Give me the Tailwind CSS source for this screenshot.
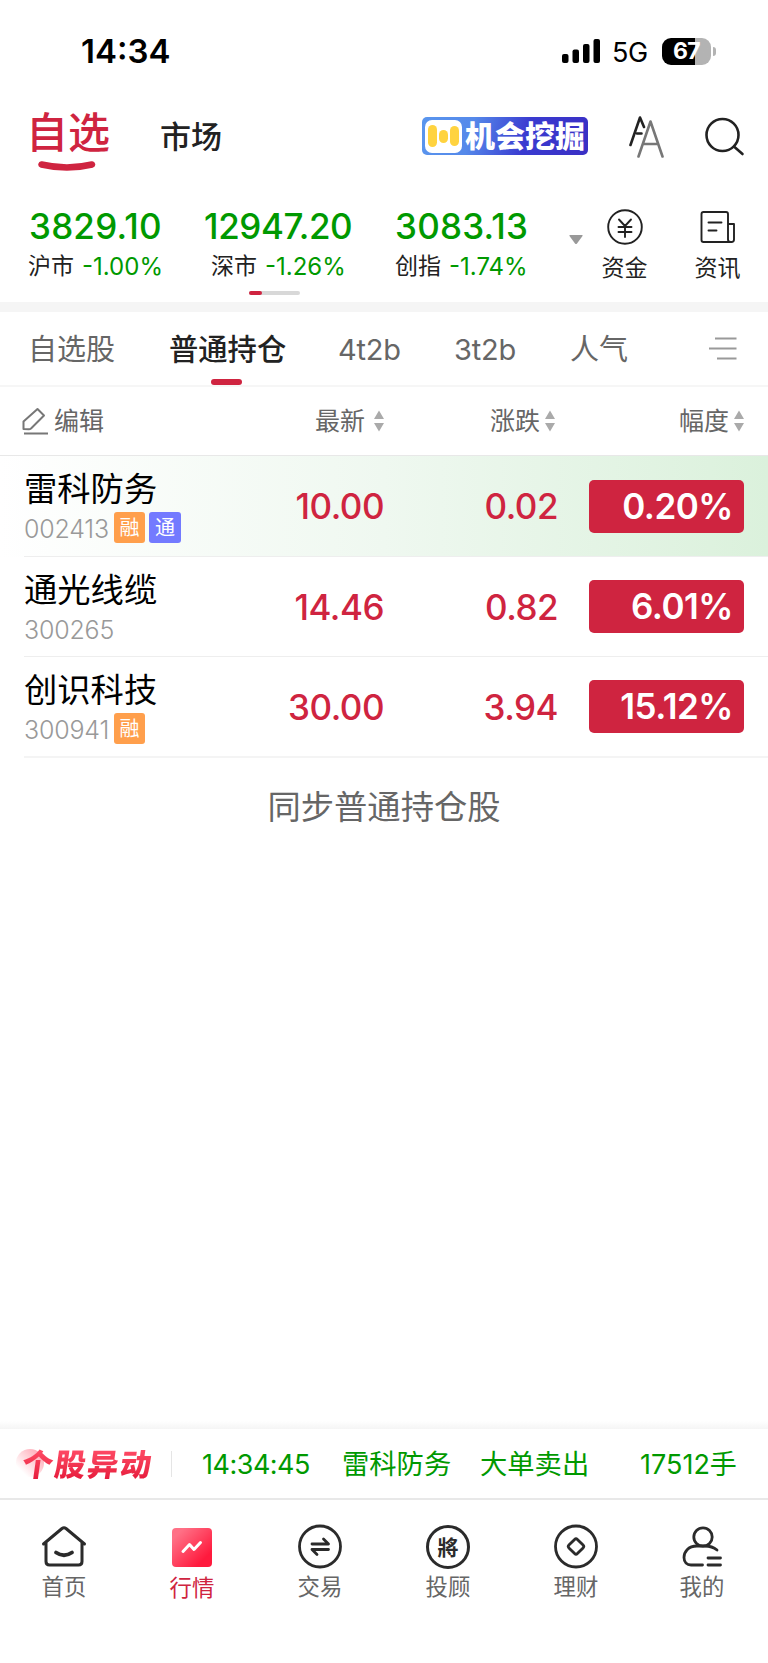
<!DOCTYPE html>
<html lang="zh-CN">
<head>
    <meta charset="UTF-8">
    <meta name="viewport" content="width=device-width, initial-scale=1.0">
    <title>自选</title>
    <script src="https://cdn.jsdelivr.net/npm/@tailwindcss/browser@4"></script>
    <style>
        body {
            font-family: 'Inter', 'Noto Sans CJK SC', sans-serif;
        }
    </style>
</head>
<body class="bg-white">
    <div class="w-[768px] h-[1663px] flex flex-col overflow-hidden whitespace-nowrap leading-none text-[#222]">

        <!-- Status bar -->
        <div class="h-[102px] flex items-center pl-[81px] pr-[52px] text-black">
            <span class="text-[33px] font-semibold">14:34</span>
            <svg class="ml-auto" width="38" height="24" viewBox="0 0 38 24">
                <rect x="0" y="15" width="6.5" height="9" rx="2"/>
                <rect x="10.5" y="10.5" width="6.5" height="13.5" rx="2"/>
                <rect x="21" y="5" width="6.5" height="19" rx="2"/>
                <rect x="31.5" y="0" width="6.5" height="24" rx="2"/>
            </svg>
            <span class="ml-[12px] w-[37px] pt-[2px] text-[27px] tracking-[-0.3px]">5G</span>
            <div class="ml-[13px] w-[49px] h-[27px] rounded-[9px] bg-linear-to-r from-black from-67% to-[#b3b3b3] to-67% flex items-center justify-center text-white text-[23px] tracking-[-0.6px] font-bold">67</div>
            <div class="ml-[2px] w-[3px] h-[9px] rounded-r-full bg-[#b3b3b3]"></div>
        </div>

        <!-- Header -->
        <header class="h-[88px] flex items-start pl-[28px]">
            <div class="w-[132px] pt-[10px]">
                <div class="-ml-[2px] text-[42px] font-medium text-[#cf2440]">自选</div>
                <svg class="ml-[10px] mt-[7px]" width="58" height="12" viewBox="0 0 58 12" fill="none" stroke="#cf2440" stroke-width="6.5" stroke-linecap="round">
                    <path d="M3.5 3.5Q29 9.5 54 3.5"/>
                </svg>
            </div>
            <div class="w-[262px] pt-[19px] text-[31px] font-medium">市场</div>
            <div class="mt-[15px] w-[166px] h-[38px] rounded-[5px] bg-linear-[105deg,#5a96ee_0%,#5589ea_30%,#3a3bd0_62%,#3a2fc4_100%] flex items-center pl-[3px]">
                <div class="w-[37px] h-[33px] rounded-[7px] bg-white flex items-center justify-center gap-[2px]">
                    <span class="w-[9px] h-[22px] rounded-full bg-[#ffd33f]"></span>
                    <span class="w-[9px] h-[13px] rounded-full bg-[#ffd33f]"></span>
                    <span class="w-[9px] h-[20px] rounded-full bg-[#ffd33f]"></span>
                </div>
                <span class="ml-[3px] text-[30px] font-black text-white">机会挖掘</span>
            </div>
            <svg class="ml-[41px] mt-[14px]" width="36" height="42" viewBox="0 0 36 42" fill="none" stroke-width="2.6" stroke-linecap="round" stroke-linejoin="round">
                <path stroke="#222" d="M1.5 29L11 1.5L15 11M8 17.5H12.5"/>
                <path stroke="#777" d="M9.5 40.5L21.5 5.5L33.5 40.5M14 28H29"/>
            </svg>
            <svg class="ml-[40px] mt-[15px]" width="40" height="40" viewBox="0 0 40 40" fill="none" stroke="#222" stroke-width="2.6" stroke-linecap="round">
                <circle cx="17.5" cy="18" r="16"/>
                <path d="M29.5 30L37.5 37"/>
            </svg>
        </header>

        <!-- Indexes -->
        <section class="h-[112px] flex flex-col">
            <div class="h-[101px] flex items-start pt-[18px] pl-[29px]">
                <div class="w-[175px] pt-px">
                    <div class="text-[35px] font-medium tracking-[0.2px] text-[#090]">3829.10</div>
                    <div class="mt-[11px] -ml-px flex gap-[8px] text-[23px]"><span>沪市</span><span class="text-[24px] text-[#090]">-1.00%</span></div>
                </div>
                <div class="w-[191px] pt-px">
                    <div class="text-[35px] font-medium tracking-[-0.4px] text-[#090]">12947.20</div>
                    <div class="mt-[11px] ml-[7px] flex gap-[8px] text-[23px]"><span>深市</span><span class="text-[24px] text-[#090]">-1.26%</span></div>
                </div>
                <div class="w-[174px] pt-px">
                    <div class="text-[35px] font-medium tracking-[0.2px] text-[#090]">3083.13</div>
                    <div class="mt-[11px] flex gap-[8px] text-[23px]"><span>创指</span><span class="text-[24px] text-[#090]">-1.74%</span></div>
                </div>
                <svg class="mt-[27px]" width="14" height="10" viewBox="0 0 14 10"><path fill="#999" d="M1 0H13Q14 0 13.5 1L8 8.5Q7 9.5 6 8.5L0.5 1Q0 0 1 0Z"/></svg>
                <div class="ml-[18px] w-[47px] pt-px flex flex-col items-center">
                    <svg width="36" height="36" viewBox="0 0 36 36" fill="none" stroke="#222" stroke-width="1.9" stroke-linecap="round">
                        <circle cx="18" cy="18" r="16.8"/>
                        <path d="M12 10.5L18 17L24 10.5M18 17V28M11.5 18H24.5M11.5 23H24.5"/>
                    </svg>
                    <div class="mt-[12px] text-[23px]">资金</div>
                </div>
                <div class="ml-[46px] w-[47px] pt-px flex flex-col items-center">
                    <svg width="36" height="36" viewBox="0 0 36 36" fill="none" stroke="#222" stroke-width="1.9" stroke-linecap="round" stroke-linejoin="round">
                        <path d="M28 15V5Q28 3 26 3H3.5Q1.5 3 1.5 5V31Q1.5 33 3.5 33H31.5Q34 33 34 30.5V15H28V30.5Q28 33 31 33M8.5 13.5H21.5M8.5 21.5H16.5"/>
                    </svg>
                    <div class="mt-[12px] text-[23px]">资讯</div>
                </div>
            </div>
            <div class="ml-[249px] w-[51px] h-[4px] rounded-full bg-[#d8d8d8]">
                <div class="w-[13px] h-[4px] rounded-full bg-[#cf2440]"></div>
            </div>
        </section>
        <div class="h-[10px] bg-[#f5f5f5]"></div>

        <!-- Group tabs -->
        <nav class="h-[75px] border-b-2 border-[#f6f6f6] flex items-start pl-[28px] text-[29px] text-[#666]">
            <div class="w-[141px] pt-[23px]">自选股</div>
            <div class="w-[169px] pt-[23px] text-[29.3px] font-medium text-[#222]">
                普通持仓
                <div class="mt-[15px] ml-[42px] w-[31px] h-[6px] rounded-full bg-[#cf2440]"></div>
            </div>
            <div class="w-[116px] pt-[23px] tracking-[-0.2px]">4t2b</div>
            <div class="w-[116px] pt-[23px] tracking-[-0.2px]">3t2b</div>
            <div class="w-[139px] pt-[23px]">人气</div>
            <svg class="mt-[25px]" width="28" height="24" viewBox="0 0 28 24" stroke="#999" stroke-width="2"><path d="M6 1.5H27.5M0 11.5H27.5M8 21.5H27.5"/></svg>
        </nav>

        <!-- Column headings -->
        <div class="h-[69px] border-b border-[#e8e8e8] flex items-center pl-[22px] text-[25px] text-[#666]">
            <svg width="27" height="28" viewBox="0 0 27 28" fill="none" stroke="#777" stroke-width="2" stroke-linejoin="round">
                <path d="M1.5 22V14.5L15.5 2L22 8.5L9 21.5Q8 22.3 7 22.3ZM2 26.5H26"/>
            </svg>
            <span class="ml-[5px] w-[261px]">编辑</span>
            <span class="w-[59px]">最新</span>
            <svg width="10" height="22" viewBox="0 0 10 22" fill="#aaa"><path d="M0 9L5 0.5L10 9ZM0 13L5 21.5L10 13Z"/></svg>
            <span class="ml-[106px] w-[55px]">涨跌</span>
            <svg width="10" height="22" viewBox="0 0 10 22" fill="#aaa"><path d="M0 9L5 0.5L10 9ZM0 13L5 21.5L10 13Z"/></svg>
            <span class="ml-[124px] w-[55px]">幅度</span>
            <svg width="10" height="22" viewBox="0 0 10 22" fill="#aaa"><path d="M0 9L5 0.5L10 9ZM0 13L5 21.5L10 13Z"/></svg>
        </div>

        <!-- Stocks -->
        <div class="pl-[24px] bg-linear-to-r from-white via-[#eff8f0] to-[#dbf1dc]">
            <div class="h-[101px] border-b border-[#eee] flex items-center text-[35px] font-medium tracking-[-0.5px] text-[#cf2440]">
                <div class="w-[200px] h-full pt-[17px] text-black font-normal tracking-normal">
                    <div class="text-[33.3px]">雷科防务</div>
                    <div class="mt-[6px] flex items-center gap-[4px] text-[25px] text-[#999]">
                        <span class="pt-[4px] w-[86px] font-light tracking-[-0.2px]">002413</span>
                        <span class="w-[31px] h-[31px] rounded-[3px] bg-[#ff9f4c] text-white text-[20px] flex items-center justify-center">融</span>
                        <span class="w-[32px] h-[31px] rounded-[3px] bg-[#737aff] text-white text-[20px] flex items-center justify-center">通</span>
                    </div>
                </div>
                <div class="w-[160px] pt-px text-right">10.00</div>
                <div class="w-[174px] pt-px text-right">0.02</div>
                <div class="ml-[31px] w-[155px] h-[53px] rounded-[5px] bg-[#cf2440] text-white font-semibold flex items-center justify-end pr-[11px]">0.20%</div>
            </div>
        </div>
        <div class="pl-[24px]">
            <div class="h-[100px] border-b border-[#eee] flex items-center text-[35px] font-medium tracking-[-0.5px] text-[#cf2440]">
                <div class="w-[200px] h-full pt-[17px] text-black font-normal tracking-normal">
                    <div class="text-[33.3px]">通光线缆</div>
                    <div class="mt-[6px] h-[31px] flex items-center gap-[4px] text-[25px] text-[#999]">
                        <span class="pt-[4px] font-light tracking-[-0.2px]">300265</span>
                    </div>
                </div>
                <div class="w-[160px] pt-px text-right">14.46</div>
                <div class="w-[174px] pt-px text-right">0.82</div>
                <div class="ml-[31px] w-[155px] h-[53px] rounded-[5px] bg-[#cf2440] text-white font-semibold flex items-center justify-end pr-[11px]">6.01%</div>
            </div>
            <div class="h-[101px] border-b-2 border-[#f4f4f4] flex items-center text-[35px] font-medium tracking-[-0.5px] text-[#cf2440]">
                <div class="w-[200px] h-full pt-[17px] text-black font-normal tracking-normal">
                    <div class="text-[33.3px]">创识科技</div>
                    <div class="mt-[6px] flex items-center gap-[4px] text-[25px] text-[#999]">
                        <span class="pt-[4px] w-[86px] font-light tracking-[-0.2px]">300941</span>
                        <span class="w-[31px] h-[31px] rounded-[3px] bg-[#ff9f4c] text-white text-[20px] flex items-center justify-center">融</span>
                    </div>
                </div>
                <div class="w-[160px] pt-px text-right">30.00</div>
                <div class="w-[174px] pt-px text-right">3.94</div>
                <div class="ml-[31px] w-[155px] h-[53px] rounded-[5px] bg-[#cf2440] text-white font-semibold flex items-center justify-end pr-[11px]">15.12%</div>
            </div>
        </div>
        <div class="pt-[33px] text-center text-[33.3px] text-[#666]">同步普通持仓股</div>

        <!-- Unusual moves ticker -->
        <div class="mt-auto h-[8px] bg-linear-to-b from-white to-[#f5f5f5]"></div>
        <div class="h-[71px] border-b-2 border-[#e8e8e8] flex items-center pl-[16px] text-[27px] text-[#090]">
            <div class="relative w-[155px] h-[30px]">
                <div class="absolute left-0 top-0 size-[28px] rounded-full bg-linear-to-bl from-[#ff9bac] to-white to-80%"></div>
                <div class="absolute left-[6px] top-0 -skew-x-8 text-[31px] tracking-[1.8px] font-black bg-linear-to-b from-[#ff4b66] to-[#e6173b] bg-clip-text text-transparent">个股异动</div>
            </div>
            <div class="w-px h-[26px] bg-[#e5e5e5]"></div>
            <span class="ml-[30px] w-[140px] pt-[2px] tracking-[-0.5px]">14:34:45</span>
            <span class="w-[138px] pt-[2px] text-[27.3px]">雷科防务</span>
            <span class="w-[160px] pt-[2px] text-[27.3px]">大单卖出</span>
            <span class="pt-[2px]">17512手</span>
        </div>

        <!-- Bottom tabs -->
        <nav class="h-[163px] pt-[24px] flex text-[22.4px] text-[#666]">
            <div class="w-[128px] flex flex-col items-center gap-[6px]">
                <svg width="46" height="46" viewBox="0 0 46 46" fill="none" stroke="#2b2b2b" stroke-width="3" stroke-linecap="round" stroke-linejoin="round">
                    <path d="M2.5 20L21 4.5Q23 3 25 4.5L43.5 20M5 18.5V37.5Q5 41 8.5 41H37.5Q41 41 41 37.5V18.5"/>
                    <path d="M15 28.5Q23 34 31 28.5" stroke-width="3.8"/>
                </svg>
                <span>首页</span>
            </div>
            <div class="w-[128px] flex flex-col items-center gap-[6px] text-[#cf2440]">
                <svg width="46" height="46" viewBox="0 0 46 46" fill="none">
                    <defs><linearGradient id="market" x1="0" y1="0" x2="1" y2="1"><stop offset=".15" stop-color="#ff7086"/><stop offset=".8" stop-color="#ff1a3d"/></linearGradient></defs>
                    <rect x="3" y="4" width="40" height="39" rx="4" fill="url(#market)"/>
                    <path d="M14 27.5L20.5 20.5L25 25.5L31.5 18.5" stroke="#fff" stroke-width="3" stroke-linecap="round" stroke-linejoin="round"/>
                </svg>
                <span class="pt-px">行情</span>
            </div>
            <div class="w-[128px] flex flex-col items-center gap-[6px]">
                <svg width="46" height="46" viewBox="0 0 46 46" fill="none" stroke="#2b2b2b" stroke-width="2.8" stroke-linecap="round" stroke-linejoin="round">
                    <circle cx="23" cy="22.5" r="20.5"/>
                    <path d="M15 20H31.5L26.5 15M31.5 25.5H15L20 30.5"/>
                </svg>
                <span>交易</span>
            </div>
            <div class="w-[128px] flex flex-col items-center gap-[6px]">
                <div class="w-[44px] h-[46px] flex items-start pt-px">
                    <div class="size-[44px] rounded-full border-3 border-[#2b2b2b] text-[21px] font-bold text-[#2b2b2b] flex items-center justify-center">將</div>
                </div>
                <span>投顾</span>
            </div>
            <div class="w-[128px] flex flex-col items-center gap-[6px]">
                <svg width="46" height="46" viewBox="0 0 46 46" fill="none" stroke="#2b2b2b" stroke-width="2.8" stroke-linejoin="round">
                    <circle cx="23" cy="22.5" r="20.5"/>
                    <rect x="17" y="16.5" width="12" height="12" rx="2" transform="rotate(45 23 22.5)"/>
                </svg>
                <span>理财</span>
            </div>
            <div class="w-[124px] flex flex-col items-center gap-[6px]">
                <svg width="46" height="46" viewBox="0 0 46 46" fill="none" stroke="#2b2b2b" stroke-width="2.8" stroke-linecap="round">
                    <circle cx="24" cy="13" r="9.2"/>
                    <path d="M38 26Q33 21.8 25 22H18C9 22 5 28 5 33.5C5 38 8 41 12 41H23.5M29 34H41.5M29 41H41.5"/>
                </svg>
                <span>我的</span>
            </div>
        </nav>
    </div>
</body>
</html>
